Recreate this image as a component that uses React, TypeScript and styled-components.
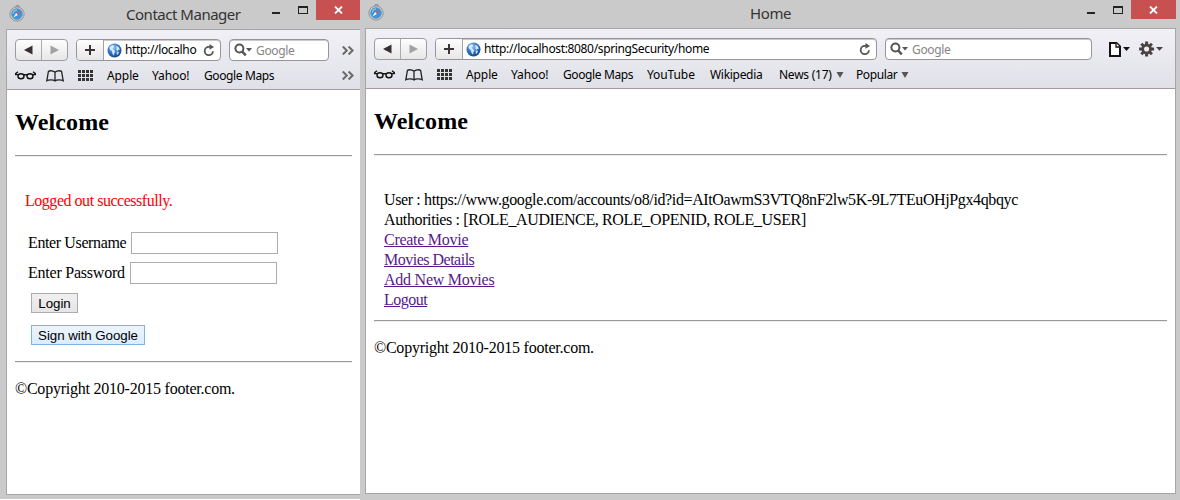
import React from "react";
import styled, { createGlobalStyle } from "styled-components";

const Global = createGlobalStyle`
  * { box-sizing: border-box; }
  html, body { margin: 0; padding: 0; background: #fff; }
  body { width: 1180px; height: 500px; overflow: hidden; }
`;

const ui = `"Noto Sans", "Open Sans", sans-serif`;
const serif = `"Liberation Serif", "Times New Roman", serif`;

const Desktop = styled.div`
  display: flex;
  width: 1180px;
  height: 500px;
`;

const WindowBox = styled.section<{ $w: number; $h: number; $side: number; $right: number }>`
  display: flex;
  flex-direction: column;
  width: ${(p) => p.$w}px;
  height: ${(p) => p.$h}px;
  padding: 0 ${(p) => p.$right}px ${(p) => (p.$right ? 6 : 4)}px ${(p) => p.$side}px;
  background: #cacaca;
`;

const TitleBar = styled.header<{ $h: number }>`
  display: flex;
  flex: none;
  align-items: flex-start;
  height: ${(p) => p.$h}px;
`;

const AppIcon = styled.div<{ $ml: number; $mt: number }>`
  width: 16px;
  height: 17px;
  margin: ${(p) => p.$mt}px 0 0 ${(p) => p.$ml}px;
  svg { display: block; }
`;

const Title = styled.h1<{ $ml: number; $mt: number; $track: number }>`
  margin: ${(p) => p.$mt}px 0 0 ${(p) => p.$ml}px;
  font: 400 15px/20px ${ui};
  letter-spacing: ${(p) => p.$track}px;
  color: #333;
  white-space: nowrap;
`;

const Controls = styled.div<{ $h: number }>`
  display: flex;
  margin-left: auto;
  height: ${(p) => p.$h}px;
  svg { display: block; }
`;

const CloseButton = styled.div<{ $w: number }>`
  display: flex;
  align-items: center;
  justify-content: center;
  width: ${(p) => p.$w}px;
  background: #c75050;
`;

const Frame = styled.div<{ $closed: boolean }>`
  display: flex;
  flex: 1;
  flex-direction: column;
  border: 1px solid #a6a6a6;
  border-right-width: ${(p) => (p.$closed ? 1 : 0)}px;
  background: #fff;
`;

const Toolbar = styled.div`
  flex: none;
  height: 60px;
  padding: 9px 0 0 8px;
  border-bottom: 1px solid #a8999f;
  background: linear-gradient(#f1f0f6, #e0e1e8);
`;

const ToolRow = styled.div`
  display: flex;
  align-items: center;
  height: 22px;
`;

const ButtonPair = styled.div`
  display: flex;
  width: 53px;
  height: 22px;
  margin-right: 8px;
  border: 1px solid #9c9ca2;
  border-radius: 4px;
  background: linear-gradient(#fdfdfd, #e7e7e8);
`;

const NavCell = styled.div`
  display: flex;
  flex: 1;
  align-items: center;
  justify-content: center;
  & + & { border-left: 1px solid #aaaab0; }
`;

const Field = styled.div<{ $w: number }>`
  display: flex;
  align-items: center;
  width: ${(p) => p.$w}px;
  height: 22px;
  margin-right: 8px;
  border: 1px solid #95959b;
  border-radius: 4px;
  overflow: hidden;
  background: #fff;
  box-shadow: inset 0 1px 0 #c9c9ce;
  svg { flex: none; }
`;

const AddCell = styled.div`
  display: flex;
  flex: none;
  align-items: center;
  justify-content: center;
  width: 27px;
  height: 20px;
  margin-right: 3px;
  border-right: 1px solid #a0a0a5;
  background: linear-gradient(#fdfdfd, #e7e7e8);
`;

const Url = styled.div`
  flex: 1;
  margin-left: 3px;
  font: 12px/20px ${ui};
  letter-spacing: -0.35px;
  white-space: nowrap;
  color: #000;
`;

const Reload = styled.div`
  display: flex;
  margin: 0 5px 0 auto;
`;

const Placeholder = styled.span`
  margin: 2px 0 0 4px;
  font: 12px/20px ${ui};
  letter-spacing: -0.35px;
  color: #858585;
`;

const Lens = styled.div`
  display: flex;
  margin-left: 4px;
`;

const Bookmarks = styled.nav`
  display: flex;
  align-items: center;
  height: 29px;
  svg { display: block; flex: none; }
`;

const IconSlot = styled.div<{ $w: number }>`
  flex: none;
  width: ${(p) => p.$w}px;
`;

const Bookmark = styled.div<{ $w: number; $track: number }>`
  display: flex;
  flex: none;
  align-items: center;
  width: ${(p) => p.$w}px;
  font: 12px/20px ${ui};
  letter-spacing: ${(p) => p.$track}px;
  white-space: nowrap;
  color: #000;
  svg { margin-left: 4px; }
`;

const More = styled.div`
  margin-left: auto;
  margin-right: 6px;
`;

const Menus = styled.div`
  display: flex;
  align-items: center;
  gap: 9px;
  margin-left: 9px;
`;

const Page = styled.main`
  padding: 0 8px;
  font: 16px/20px ${serif};
  color: #000;
`;

const Heading = styled.h2`
  margin: 18px 0 19px;
  font: 700 24px/28px ${serif};
  letter-spacing: 0.1px;
`;

const Rule = styled.hr`
  height: 2px;
  margin: 0;
  border: 0;
  border-top: 1px solid #9a9a9a;
  border-bottom: 1px solid #eee;
`;

const Notice = styled.p`
  margin: 34px 0 0 10px;
  letter-spacing: -0.47px;
  color: #f00;
`;

const Form = styled.form`
  display: flex;
  flex-direction: column;
  align-items: flex-start;
  margin: 21px 0 16px 13px;
`;

const FormRow = styled.label<{ $label: number; $track: number }>`
  display: grid;
  grid-template-columns: ${(p) => p.$label}px 147px;
  align-items: center;
  height: 22px;
  margin-bottom: 8px;
  letter-spacing: ${(p) => p.$track}px;
  white-space: nowrap;
`;

const Input = styled.input`
  width: 147px;
  height: 22px;
  border: 1px solid #abadb3;
  background: #fff;
`;

const Button = styled.button<{ $active?: boolean; $w: number }>`
  width: ${(p) => p.$w}px;
  height: 20px;
  margin: 1px 0 11px 3px;
  padding: 1px 0 0;
  border: 1px solid ${(p) => (p.$active ? "#7eb4ea" : "#acacac")};
  background: ${(p) => (p.$active ? "linear-gradient(#ecf4fc, #dcecfc)" : "linear-gradient(#f0f0f0, #e5e5e5)")};
  font: 13.33px/17px "Liberation Sans", Arial, sans-serif;
  letter-spacing: -0.06px;
  color: #000;
  white-space: nowrap;
  &:last-child { margin-bottom: 0; }
`;

const Account = styled.div`
  display: flex;
  flex-direction: column;
  align-items: flex-start;
  margin: 34px 0 10px 10px;
  white-space: nowrap;
`;

const Line = styled.span<{ $track: number }>`
  letter-spacing: ${(p) => p.$track}px;
`;

const Link = styled.a<{ $track: number }>`
  letter-spacing: ${(p) => p.$track}px;
  color: #551a8b;
  text-decoration: underline;
`;

const Footer = styled.footer`
  margin-top: 16px;
  letter-spacing: -0.23px;
`;

const Compass = () => (
  <svg width="16" height="17" viewBox="0 0 16 17">
    <path d="M7 2V.7h3V2" fill="none" stroke="#8a8d90" />
    <circle cx="8" cy="9" r="7.1" fill="#d5d7d8" stroke="#858a8e" strokeWidth=".9" />
    <circle cx="8" cy="9" r="5.5" fill="#3a95dc" stroke="#7796ae" strokeWidth=".7" />
    <path d="M4.2 8.5A4 4 0 0 1 8 4.8" stroke="#9bd3f6" fill="none" />
    <path d="M11.8 5.4 8.8 9.9 7.1 8.1Z" fill="#e35445" />
    <path d="M4.4 12.6 8.8 9.9 7.1 8.1Z" fill="#f5fbff" />
  </svg>
);

const Globe = () => (
  <svg width="15" height="15" viewBox="0 0 15 15">
    <defs>
      <radialGradient id="sea" cx=".4" cy=".3" r=".75">
        <stop offset="0" stopColor="#9fcbf4" />
        <stop offset=".5" stopColor="#3679c4" />
        <stop offset="1" stopColor="#103f86" />
      </radialGradient>
    </defs>
    <circle cx="7.5" cy="7.5" r="7" fill="url(#sea)" />
    <path d="M2.4 4.2 5 2.2l2.2.6-.8 1.6L5.4 6l1.6 1 1.2 1.4-.9 1.9-.3 2.4-1.6-2-.4-2.6L3 6.6ZM9 3l2.4.8 1.6 3-1.5-.1-1 1.2-1.2-1.3.3-1.6Z" fill="#e4f2ff" opacity=".9" />
    <path d="m9.6 8.6 2.4.1-.8 2.6-1.3.6Z" fill="#b9dbf7" />
  </svg>
);

const ReloadIcon = () => (
  <svg width="12" height="13" viewBox="0 0 12 13">
    <path d="M7.4 2.9H5.8a4.1 4.1 0 1 0 4.1 4.3" fill="none" stroke="#555" strokeWidth="1.8" />
    <path d="M6.5 0v5.8L11 2.9Z" fill="#555" />
  </svg>
);

const LensIcon = () => (
  <svg width="18" height="14" viewBox="0 0 18 14">
    <circle cx="5.4" cy="5.5" r="4" fill="none" stroke="#555" strokeWidth="2" />
    <path d="m8 8.3 3.8 4" stroke="#555" strokeWidth="2.4" />
    <path d="M12 5h6l-3 3.4Z" fill="#555" />
  </svg>
);

const Glasses = () => (
  <svg width="21" height="9" viewBox="0 0 21 9">
    <g fill="none" stroke="#111" strokeWidth="1.4">
      <ellipse cx="6" cy="5.3" rx="3" ry="2.5" />
      <ellipse cx="15" cy="5.3" rx="3" ry="2.5" />
      <path d="M8.6 3.8h3.8M3.6 3.6H.6v-1L3 .8M17.4 3.6h3v-1L18 .8" />
    </g>
  </svg>
);

const Book = () => (
  <svg width="18" height="12" viewBox="0 0 18 12">
    <path d="M9 2.2v8.5M9 2.2C7.5.7 4.2.3 2.4 1.4L.8 10.8c2-1.2 6.5-1.2 8.2.1 1.7-1.3 6.2-1.3 8.2-.1L15.6 1.4C13.8.3 10.5.7 9 2.2Z" fill="none" stroke="#222" strokeWidth="1.3" />
  </svg>
);

const Grid = () => (
  <svg width="16" height="11" viewBox="0 0 16 11">
    {[0, 4, 8].map((y) => [0, 4, 8, 12].map((x) => <rect key={`${x}-${y}`} x={x} y={y} width="3" height="3" fill="#343434" />))}
  </svg>
);

const Arrow = ({ back }: { back?: boolean }) => (
  <svg width="9" height="10" viewBox="0 0 9 10">
    <path d={back ? "M8.5 .5v9L0 5Z" : "M.5 .5v9L9 5Z"} fill={back ? "#373033" : "#a2a2a2"} />
  </svg>
);

const Plus = () => (
  <svg width="10" height="10" viewBox="0 0 10 10">
    <path d="M0 5h10M5 0v10" stroke="#3b3436" strokeWidth="2" />
  </svg>
);

const Chevrons = () => (
  <svg width="12" height="9" viewBox="0 0 12 9">
    <path d="m.8.5 4 4-4 4M6.6.5l4 4-4 4" fill="none" stroke="#6a6a6a" strokeWidth="2" />
  </svg>
);

const Down = () => (
  <svg width="8" height="6" viewBox="0 0 8 6">
    <path d="M.5 0h7L4 6Z" fill="#555" />
  </svg>
);

const PageIcon = () => (
  <svg width="21" height="15" viewBox="0 0 21 15">
    <path d="M1 1h6.5L11 4.5V14H1Z" fill="#fff" stroke="#161214" strokeWidth="2" />
    <path d="M7 1v4h4" fill="#fff" stroke="#161214" strokeWidth="1.3" />
    <path d="M14 5h7l-3.5 4Z" fill="#161214" />
  </svg>
);

const Gear = () => (
  <svg width="24" height="16" viewBox="0 0 24 16">
    <g fill="#4a4142">
      {[0, 45, 90, 135].map((a) => <rect key={a} x="6.1" y=".5" width="3" height="15" transform={`rotate(${a} 7.6 8)`} />)}
    </g>
    <circle cx="7.6" cy="8" r="3.9" fill="#ededf2" stroke="#4a4142" strokeWidth="2.7" />
    <path d="M17 6h7l-3.5 3.8Z" fill="#4a4142" />
  </svg>
);

const WindowButtons = () => (
  <svg width="44" height="20" viewBox="0 0 44 20">
    <path d="M0 12h8v2H0Z" fill="#222" />
    <path d="M26 6h10v8H26ZM27 8v5h8V8Z" fill="#222" fillRule="evenodd" />
  </svg>
);

const Cross = () => (
  <svg width="9" height="8" viewBox="0 0 9 8">
    <path d="m1 .5 7 7M8 .5l-7 7" stroke="#fff" strokeWidth="1.8" />
  </svg>
);

const marks = [
  { name: "Apple", w: 45, track: -0.1 },
  { name: "Yahoo!", w: 52, track: -0.1 },
  { name: "Google Maps", w: 84, track: -0.38 },
  { name: "YouTube", w: 63, track: -0.1 },
  { name: "Wikipedia", w: 69, track: -0.3 },
  { name: "News (17)", w: 77, track: -0.25 },
  { name: "Popular", w: 60, track: -0.4 },
];

function BrowserToolbar({ wide }: { wide?: boolean }) {
  return (
    <Toolbar>
      <ToolRow>
        <ButtonPair>
          <NavCell><Arrow back /></NavCell>
          <NavCell><Arrow /></NavCell>
        </ButtonPair>
        <Field $w={wide ? 442 : 145}>
          <AddCell><Plus /></AddCell>
          <Globe />
          <Url>{wide ? "http://localhost:8080/springSecurity/home" : "http://localho"}</Url>
          <Reload><ReloadIcon /></Reload>
        </Field>
        <Field $w={wide ? 207 : 100}>
          <Lens><LensIcon /></Lens>
          <Placeholder>Google</Placeholder>
        </Field>
        {wide ? <Menus><PageIcon /><Gear /></Menus> : <More><Chevrons /></More>}
      </ToolRow>
      <Bookmarks>
        <IconSlot $w={31}><Glasses /></IconSlot>
        <IconSlot $w={32}><Book /></IconSlot>
        <IconSlot $w={29}><Grid /></IconSlot>
        {marks.slice(0, wide ? 7 : 3).map((m, i) => (
          <Bookmark key={m.name} $w={m.w} $track={m.track}>{m.name}{i > 4 && <Down />}</Bookmark>
        ))}
        {!wide && <More><Chevrons /></More>}
      </Bookmarks>
    </Toolbar>
  );
}

export default function App() {
  return (
    <Desktop>
      <Global />
      <WindowBox $w={360} $h={499} $side={6} $right={0}>
        <TitleBar $h={29}>
          <AppIcon $ml={3} $mt={5}><Compass /></AppIcon>
          <Title $ml={101} $mt={4} $track={-0.48}>Contact Manager</Title>
          <Controls $h={20}>
            <WindowButtons />
            <CloseButton $w={44}><Cross /></CloseButton>
          </Controls>
        </TitleBar>
        <Frame $closed={false}>
          <BrowserToolbar />
          <Page>
            <Heading>Welcome</Heading>
            <Rule />
            <Notice>Logged out successfully.</Notice>
            <Form>
              <FormRow $label={103} $track={-0.38}>Enter Username <Input /></FormRow>
              <FormRow $label={102} $track={-0.23}>Enter Password <Input type="password" /></FormRow>
              <Button type="button" $w={47}>Login</Button>
              <Button type="button" $w={114} $active>Sign with Google</Button>
            </Form>
            <Rule />
            <Footer>©Copyright 2010-2015 footer.com.</Footer>
          </Page>
        </Frame>
      </WindowBox>
      <WindowBox $w={820} $h={500} $side={5} $right={4}>
        <TitleBar $h={28}>
          <AppIcon $ml={3} $mt={4}><Compass /></AppIcon>
          <Title $ml={366} $mt={3} $track={-0.4}>Home</Title>
          <Controls $h={19}>
            <WindowButtons />
            <CloseButton $w={45}><Cross /></CloseButton>
          </Controls>
        </TitleBar>
        <Frame $closed>
          <BrowserToolbar wide />
          <Page>
            <Heading>Welcome</Heading>
            <Rule />
            <Account>
              <Line $track={-0.375}>User : https://www.google.com/accounts/o8/id?id=AItOawmS3VTQ8nF2lw5K-9L7TEuOHjPgx4qbqyc</Line>
              <Line $track={-0.375}>Authorities : [ROLE_AUDIENCE, ROLE_OPENID, ROLE_USER]</Line>
              <Link $track={-0.27}>Create Movie</Link>
              <Link $track={-0.5}>Movies Details</Link>
              <Link $track={-0.24}>Add New Movies</Link>
              <Link $track={-0.5}>Logout</Link>
            </Account>
            <Rule />
            <Footer>©Copyright 2010-2015 footer.com.</Footer>
          </Page>
        </Frame>
      </WindowBox>
    </Desktop>
  );
}
